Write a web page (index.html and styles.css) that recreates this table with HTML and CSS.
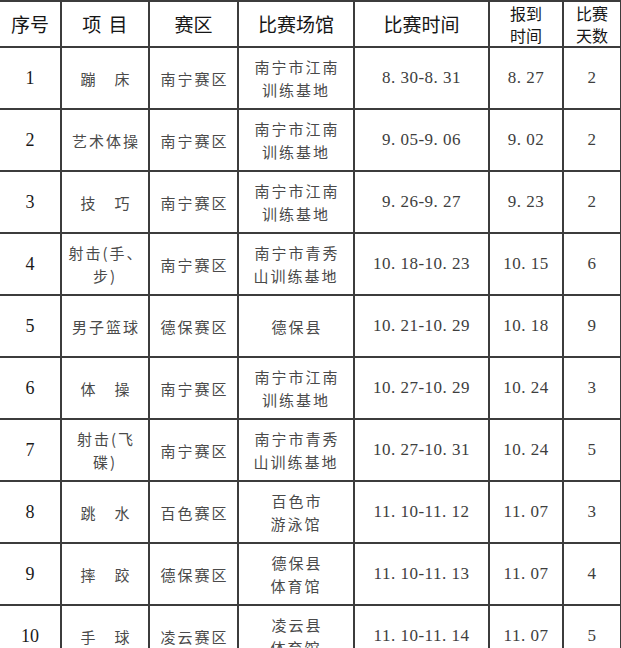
FILE: index.html
```html
<!DOCTYPE html>
<html lang="zh-CN">
<head>
<meta charset="utf-8">
<title>赛程表</title>
<link rel="stylesheet" href="styles.css">
</head>
<body>
<table class="sched">
  <colgroup>
    <col class="c-no"><col class="c-item"><col class="c-zone"><col class="c-venue"><col class="c-time"><col class="c-reg"><col class="c-days">
  </colgroup>
  <thead>
    <tr class="head">
      <th>序号</th>
      <th class="spaced">项 目</th>
      <th>赛区</th>
      <th>比赛场馆</th>
      <th>比赛时间</th>
      <th class="small">报到<br>时间</th>
      <th class="small">比赛<br>天数</th>
    </tr>
  </thead>
  <tbody>
    <tr><td class="no">1</td><td class="cn">蹦　床</td><td class="cn">南宁赛区</td><td class="cn">南宁市江南<br>训练基地</td><td class="num">8. 30-8. 31</td><td class="num">8. 27</td><td class="num">2</td></tr>
    <tr><td class="no">2</td><td class="cn">艺术体操</td><td class="cn">南宁赛区</td><td class="cn">南宁市江南<br>训练基地</td><td class="num">9. 05-9. 06</td><td class="num">9. 02</td><td class="num">2</td></tr>
    <tr><td class="no">3</td><td class="cn">技　巧</td><td class="cn">南宁赛区</td><td class="cn">南宁市江南<br>训练基地</td><td class="num">9. 26-9. 27</td><td class="num">9. 23</td><td class="num">2</td></tr>
    <tr><td class="no">4</td><td class="cn">射击(手、<br>步)</td><td class="cn">南宁赛区</td><td class="cn">南宁市青秀<br>山训练基地</td><td class="num">10. 18-10. 23</td><td class="num">10. 15</td><td class="num">6</td></tr>
    <tr><td class="no">5</td><td class="cn">男子篮球</td><td class="cn">德保赛区</td><td class="cn">德保县</td><td class="num">10. 21-10. 29</td><td class="num">10. 18</td><td class="num">9</td></tr>
    <tr><td class="no">6</td><td class="cn">体　操</td><td class="cn">南宁赛区</td><td class="cn">南宁市江南<br>训练基地</td><td class="num">10. 27-10. 29</td><td class="num">10. 24</td><td class="num">3</td></tr>
    <tr><td class="no">7</td><td class="cn">射击(飞<br>碟)</td><td class="cn">南宁赛区</td><td class="cn">南宁市青秀<br>山训练基地</td><td class="num">10. 27-10. 31</td><td class="num">10. 24</td><td class="num">5</td></tr>
    <tr><td class="no">8</td><td class="cn">跳　水</td><td class="cn">百色赛区</td><td class="cn">百色市<br>游泳馆</td><td class="num">11. 10-11. 12</td><td class="num">11. 07</td><td class="num">3</td></tr>
    <tr><td class="no">9</td><td class="cn">摔　跤</td><td class="cn">德保赛区</td><td class="cn">德保县<br>体育馆</td><td class="num">11. 10-11. 13</td><td class="num">11. 07</td><td class="num">4</td></tr>
    <tr><td class="no">10</td><td class="cn">手　球</td><td class="cn">凌云赛区</td><td class="cn">凌云县<br>体育馆</td><td class="num">11. 10-11. 14</td><td class="num">11. 07</td><td class="num">5</td></tr>
  </tbody>
</table>
</body>
</html>
```

FILE: styles.css
```css
html, body {
  margin: 0;
  padding: 0;
  background: #ffffff;
  overflow: hidden;
}

.sched {
  border-collapse: collapse;
  table-layout: fixed;
  width: 622px;
  margin-left: -2px;
  font-family: "Noto Sans CJK SC", "Liberation Sans", sans-serif;
}

.c-no { width: 62px; }
.c-item { width: 88px; }
.c-zone { width: 89px; }
.c-venue { width: 116px; }
.c-time { width: 135px; }
.c-reg { width: 74px; }
.c-days { width: 58px; }

.sched th,
.sched td {
  border: 2px solid #3c3c3c;
  padding: 0;
  text-align: center;
  vertical-align: middle;
  overflow: hidden;
  white-space: nowrap;
}

.head {
  height: 46px;
}

.head th {
  font-weight: 400;
  font-size: 19px;
  color: #161616;
  line-height: 24px;
}

.head th.spaced {
  word-spacing: 3px;
}

.head th.small {
  font-size: 16px;
  line-height: 22px;
}

tbody tr {
  height: 62px;
}

.no {
  font-family: "Liberation Serif", serif;
  font-size: 18px;
  color: #1a1a1a;
}

.cn {
  font-size: 15px;
  letter-spacing: 2px;
  line-height: 23px;
  color: #4a4a4a;
  text-indent: 2px;
}

.num {
  font-family: "Liberation Serif", serif;
  font-size: 17px;
  letter-spacing: 0.5px;
  color: #3e3e3e;
}
```
